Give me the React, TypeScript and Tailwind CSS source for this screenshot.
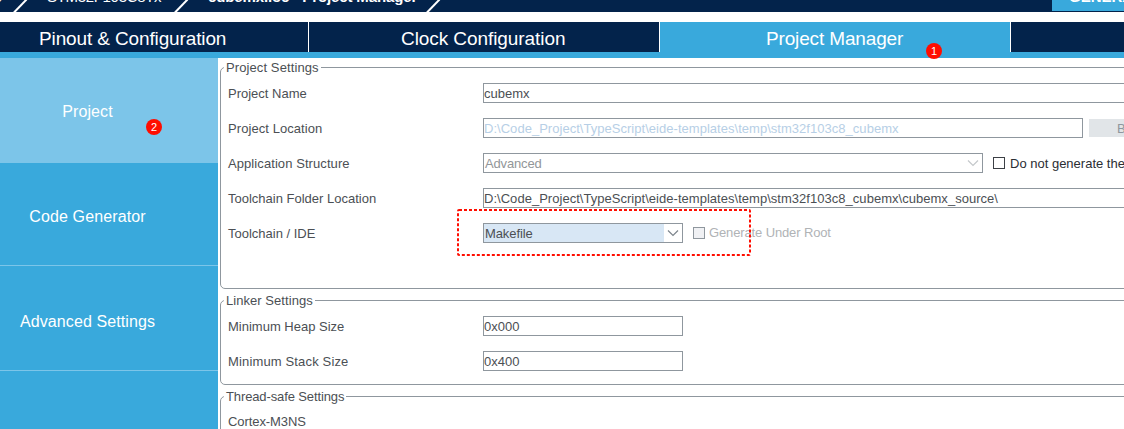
import type { ReactNode } from 'react';
import { clsx } from 'clsx';

function Slash({ className }: { className: string }) {
  return (
    <svg className={clsx('absolute top-0 h-3 w-4', className)} viewBox="0 0 16 12" fill="none">
      <path d="M1 12.5 L13.5 -0.5" stroke="#ffffff" strokeWidth="2" />
    </svg>
  );
}

function Badge({ n, className }: { n: number; className: string }) {
  return (
    <span
      className={clsx(
        'absolute z-10 flex size-4 items-center justify-center rounded-full bg-[#ff0d00] text-[11px] leading-none text-white',
        className,
      )}
    >
      {n}
    </span>
  );
}

function Chevron({ color }: { color: string }) {
  return (
    <svg className="mr-[3px] h-3 w-3 shrink-0" viewBox="0 0 12 12" fill="none">
      <path d="M1 3.5 L6 8.5 L11 3.5" stroke={color} strokeWidth="1.2" />
    </svg>
  );
}

function Group({
  title,
  className,
  titleClass,
  children,
}: {
  title: string;
  className: string;
  titleClass: string;
  children: ReactNode;
}) {
  return (
    <fieldset className={clsx('ml-0.5 w-[920px] shrink-0 rounded-[5px] border border-[#8f979e]', className)}>
      <legend className={clsx('ml-[3px] h-[18px] px-0.5 leading-5', titleClass)}>{title}</legend>
      {children}
    </fieldset>
  );
}

function Row({ label, labelClass, children }: { label: string; labelClass?: string; children?: ReactNode }) {
  return (
    <div className="flex h-5 items-center">
      <span className={clsx('w-[255px] shrink-0 pt-0.5 leading-5', labelClass)}>{label}</span>
      {children}
    </div>
  );
}

function Field({ className, children }: { className: string; children: ReactNode }) {
  return (
    <div className={clsx('flex h-5 shrink-0 items-start border border-[#8f979e] leading-5', className)}>
      {children}
    </div>
  );
}

export default function App() {
  return (
    <div className="flex h-[429px] w-[1124px] flex-col overflow-hidden bg-white font-['Liberation_Sans',Arial,sans-serif] text-[13px] text-[#4b4f54]">
      <header className="relative h-3 shrink-0 overflow-hidden bg-[#03234b] text-white">
        <div className="-mt-3 flex h-[18px] text-[15px] leading-[18px] whitespace-nowrap">
          <span className="w-[47px] shrink-0 -indent-[38px]">Home</span>
          <span className="w-[161px] shrink-0 tracking-[-0.32px]">STM32F103C8Tx</span>
          <span className="w-[861px] shrink-0 font-bold tracking-[-0.12px]">cubemx.ioc - Project Manager</span>
        </div>
        <Slash className="left-[13px]" />
        <Slash className="left-[174px]" />
        <Slash className="left-[426px]" />
        <div className="absolute top-0 left-[1052px] h-[11px] w-[72px] overflow-hidden bg-[#39a9dc]">
          <div className="-mt-3 pl-[17px] text-[15px] leading-[18px] font-bold whitespace-nowrap">
            GENERATE CODE
          </div>
        </div>
      </header>

      <nav className="relative mt-2.5 flex h-9 shrink-0 border-b-[6px] border-[#39a9dc] bg-[#03234b] text-[19px] leading-[34px] text-white">
        <div className="h-[30px] w-[308px] pl-[39px] tracking-[-0.13px]">Pinout &amp; Configuration</div>
        <div className="h-[30px] w-[351px] border-l border-white pl-[92px] tracking-[-0.07px]">
          Clock Configuration
        </div>
        <div className="h-[30px] w-[351px] border-l border-white bg-[#39a9dc] pl-[106px] tracking-[-0.15px]">
          Project Manager
        </div>
        <div className="h-[30px] flex-1 border-l border-white" />
        <Badge n={1} className="top-[21px] left-[926px]" />
      </nav>

      <div className="flex h-[371px]">
        <aside className="relative flex w-[218px] shrink-0 flex-col bg-[#39a9dc] text-[16px] text-white">
          <div className="flex h-[105px] items-center bg-[#7cc5e9] pt-0.5 pr-[43px]">
            <span className="w-full text-center tracking-[0.12px]">Project</span>
          </div>
          <div className="flex h-[103px] items-center border-b border-[#7cc5e9] pt-[5px] pr-[43px]">
            <span className="w-full text-center tracking-[0.12px]">Code Generator</span>
          </div>
          <div className="flex h-[105px] items-center border-b border-[#7cc5e9] pt-[7px] pr-[43px]">
            <span className="w-full text-center tracking-[0.1px]">Advanced Settings</span>
          </div>
          <Badge n={2} className="top-[61px] left-[146px]" />
        </aside>

        <main className="relative flex min-w-0 flex-1 flex-col overflow-hidden whitespace-nowrap">
          <Group title="Project Settings" className="h-[231px]" titleClass="tracking-[0.1px]">
            <div className="flex flex-col gap-[15px] pt-[7px] pl-[7px]">
              <Row label="Project Name">
                <Field className="w-[700px]">cubemx</Field>
              </Row>
              <Row label="Project Location" labelClass="tracking-[0.07px]">
                <Field className="w-[600px] text-[#b7cfe6]">
                  <span className="tracking-[0.03px]">
                    D:\Code_Project\TypeScript\eide-templates\temp\stm32f103c8_cubemx
                  </span>
                </Field>
                <div className="ml-1.5 h-[18px] w-[100px] shrink-0 bg-[#e1e5e8] pl-7 leading-5 text-[#8f979e]">
                  Browse
                </div>
              </Row>
              <Row label="Application Structure" labelClass="tracking-[0.08px]">
                <Field className="w-[500px] justify-between pl-px text-[#929699]">
                  <span className="tracking-[-0.15px]">Advanced</span>
                  <span className="flex h-[18px] items-center">
                    <Chevron color="#c4c8cb" />
                  </span>
                </Field>
                <span className="ml-2.5 size-3 shrink-0 border border-[#3c4046]" />
                <span className="ml-[5px] pt-0.5 leading-5 text-[#2b2e33]">Do not generate the main()</span>
              </Row>
              <Row label="Toolchain Folder Location">
                <Field className="w-[700px]">
                  <span className="tracking-[0.03px]">
                    D:\Code_Project\TypeScript\eide-templates\temp\stm32f103c8_cubemx\cubemx_source\
                  </span>
                </Field>
              </Row>
              <Row label="Toolchain / IDE">
                <Field className="w-[200px] justify-between">
                  <span className="h-[18px] w-[180px] bg-[#d8e7f5] pl-px leading-5 tracking-[-0.1px]">Makefile</span>
                  <span className="flex h-[18px] items-center">
                    <Chevron color="#7d858c" />
                  </span>
                </Field>
                <span className="ml-2.5 size-3 shrink-0 border border-[#8f979e] bg-[#f0f1f4]" />
                <span className="ml-1 leading-5 tracking-[-0.13px] text-[#b0b3b6]">Generate Under Root</span>
              </Row>
            </div>
          </Group>

          <Group title="Linker Settings" className="mt-[2px] h-[94px]" titleClass="tracking-[0.05px]">
            <div className="flex flex-col gap-[15px] pt-[7px] pl-[7px]">
              <Row label="Minimum Heap Size">
                <Field className="w-[200px]">0x000</Field>
              </Row>
              <Row label="Minimum Stack Size" labelClass="tracking-[0.15px]">
                <Field className="w-[200px]">0x400</Field>
              </Row>
            </div>
          </Group>

          <Group title="Thread-safe Settings" className="mt-[2px] h-[100px]" titleClass="tracking-[-0.12px]">
            <div className="pt-[6px] pl-[7px]">
              <Row label="Cortex-M3NS" labelClass="tracking-[-0.08px]" />
            </div>
          </Group>

          <svg className="absolute top-[151px] left-[239px] h-[47px] w-[294px]" viewBox="0 0 294 47" fill="none">
            <rect x="1" y="1" width="292" height="45" rx="1" stroke="#ff0d00" strokeWidth="2" strokeDasharray="3 2" />
          </svg>
        </main>
      </div>
    </div>
  );
}
